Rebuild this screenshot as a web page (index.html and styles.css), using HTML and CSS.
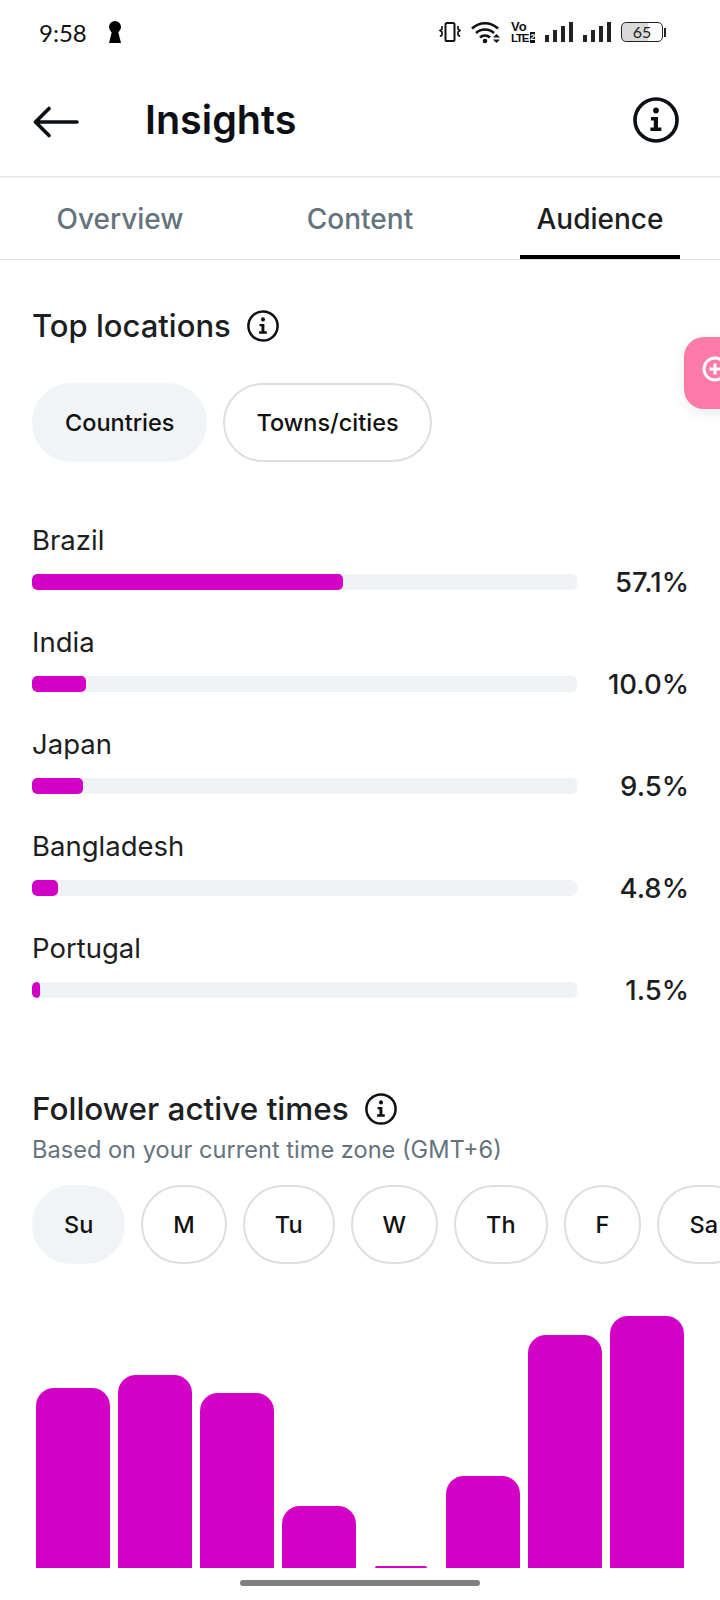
FILE: index.html
```html
<!DOCTYPE html>
<html lang="en">
<head>
  <meta charset="UTF-8">
  <title>Insights</title>
  <link rel="stylesheet" href="styles.css">
</head>
<body>
  <svg class="defs" width="0" height="0">
    <symbol id="info" viewBox="0 0 46 46">
      <circle cx="23" cy="23" r="21" fill="none" stroke="currentColor" stroke-width="3.6"/>
      <circle cx="23" cy="13.5" r="2.9" fill="currentColor"/>
      <path d="M18 20h7v10.5h3.4v3.5H17.4v-3.5h3.4v-7H18z" fill="currentColor"/>
    </symbol>
  </svg>

  <div class="page">
    <div class="status-bar">
      <div class="status-left">
        <span class="clock">9:58</span>
        <svg class="keyhole" width="14" height="22" viewBox="0 0 14 22">
          <circle cx="7" cy="6" r="6" fill="#000"/>
          <path d="M4.5 8h5l3.5 14H1z" fill="#000"/>
        </svg>
      </div>
      <div class="status-right">
        <svg width="22" height="22" viewBox="0 0 22 22">
          <rect x="6.5" y="2" width="9" height="18" rx="1.6" fill="none" stroke="#111" stroke-width="2"/>
          <path d="M3 5v3l-2 1.5 2 1.5v3l-2 1.5M19 5v3l2 1.5-2 1.5v3l2 1.5" fill="none" stroke="#111" stroke-width="1.6"/>
        </svg>
        <svg class="wifi" width="30" height="24" viewBox="0 0 30 24">
          <path d="M1 8.5c7.5-7 18.500-7 26 0M5 13c5-4.700 13-4.700 18 0M9 17.500c2.800-2.600 7.200-2.600 10 0" fill="none" stroke="#111" stroke-width="2.6"/>
          <circle cx="14" cy="21" r="2.300" fill="#111"/>
          <path d="M22 17.500h7l-3.500-3.500zM22 19.500h7l-3.500 3.500z" fill="#111"/>
        </svg>
        <div class="volte"><span class="vo">Vo</span><span class="lte">LTE<b>2</b></span></div>
        <div class="signal">
          <i style="height:7px"></i><i style="height:12px"></i><i style="height:16px"></i><i style="height:20px"></i>
        </div>
        <div class="signal">
          <i style="height:7px"></i><i style="height:12px"></i><i style="height:16px"></i><i style="height:20px"></i>
        </div>
        <div class="battery"><span class="battery-body">65</span><span class="battery-nub"></span></div>
      </div>
    </div>

    <div class="header">
      <svg class="back" width="46" height="32" viewBox="0 0 46 32">
        <path d="M44 16H3M16 2.500 2.500 16 16 29.500" fill="none" stroke="#0c1014" stroke-width="3.600" stroke-linecap="round" stroke-linejoin="round"/>
      </svg>
      <h1>Insights</h1>
      <svg class="info-big"><use href="#info"/></svg>
    </div>

    <div class="tabs">
      <div class="tab">Overview</div>
      <div class="tab">Content</div>
      <div class="tab active">Audience</div>
    </div>

    <div class="section locations">
      <h2>Top locations <svg class="info-small"><use href="#info"/></svg></h2>
      <div class="pills">
        <div class="pill selected">Countries</div>
        <div class="pill">Towns/cities</div>
      </div>
      <div class="rows">
        <div class="row">
          <div class="row-label">Brazil</div>
          <div class="row-line">
            <div class="track"><div class="fill" style="width:311px"></div></div>
            <div class="pct">57.1%</div>
          </div>
        </div>
        <div class="row">
          <div class="row-label">India</div>
          <div class="row-line">
            <div class="track"><div class="fill" style="width:54px"></div></div>
            <div class="pct">10.0%</div>
          </div>
        </div>
        <div class="row">
          <div class="row-label">Japan</div>
          <div class="row-line">
            <div class="track"><div class="fill" style="width:51px"></div></div>
            <div class="pct">9.5%</div>
          </div>
        </div>
        <div class="row">
          <div class="row-label">Bangladesh</div>
          <div class="row-line">
            <div class="track"><div class="fill" style="width:26px"></div></div>
            <div class="pct">4.8%</div>
          </div>
        </div>
        <div class="row">
          <div class="row-label">Portugal</div>
          <div class="row-line">
            <div class="track"><div class="fill" style="width:8px"></div></div>
            <div class="pct">1.5%</div>
          </div>
        </div>
      </div>
    </div>

    <div class="section times">
      <h2>Follower active times <svg class="info-small"><use href="#info"/></svg></h2>
      <p class="note">Based on your current time zone (GMT+6)</p>
      <div class="pills days">
        <div class="pill selected">Su</div>
        <div class="pill">M</div>
        <div class="pill">Tu</div>
        <div class="pill">W</div>
        <div class="pill">Th</div>
        <div class="pill">F</div>
        <div class="pill">Sa</div>
      </div>
      <div class="chart">
        <div class="bar" style="height:180px"></div>
        <div class="bar" style="height:193px"></div>
        <div class="bar" style="height:175px"></div>
        <div class="bar" style="height:62px"></div>
        <div class="bar tiny"></div>
        <div class="bar" style="height:92px"></div>
        <div class="bar" style="height:233px"></div>
        <div class="bar" style="height:252px"></div>
      </div>
    </div>

    <div class="float-tab">
      <svg width="28" height="28" viewBox="0 0 28 28">
        <circle cx="14" cy="14" r="11" fill="none" stroke="#fff" stroke-width="3"/>
        <path d="M14 8.500v11M8.500 14h11" stroke="#fff" stroke-width="3"/>
      </svg>
    </div>
    <div class="home-bar"></div>
  </div>
</body>
</html>
```

FILE: styles.css
```css
body {
  margin: 0;
  background: #fff;
  color: #1c1e21;
  font-family: Inter, 'Noto Sans', sans-serif;
}
.defs {
  position: absolute;
}
.page {
  position: relative;
  width: 720px;
  height: 1600px;
  overflow: hidden;
}

/* status bar */
.status-bar {
  display: flex;
  justify-content: space-between;
  align-items: center;
  height: 64px;
  padding: 0 54px 0 39px;
  box-sizing: border-box;
}
.status-left {
  display: flex;
  align-items: center;
  gap: 21px;
}
.clock {
  font-family: Lato, sans-serif;
  font-size: 24px;
  color: #111;
}
.status-right {
  display: flex;
  align-items: center;
  gap: 10px;
}
.volte {
  display: flex;
  flex-direction: column;
  width: 24px;
  font-family: 'Liberation Sans', sans-serif;
  font-weight: 700;
  color: #111;
}
.vo {
  font-size: 13px;
  line-height: 11px;
}
.lte {
  display: flex;
  align-items: center;
  font-size: 11.5px;
  line-height: 12px;
  letter-spacing: -1.2px;
  white-space: nowrap;
}
.lte b {
  width: 7px;
  margin-left: 2px;
  background: #111;
  color: #fff;
  font-size: 9px;
  line-height: 11px;
  letter-spacing: 0;
  text-align: center;
}
.signal {
  display: flex;
  align-items: flex-end;
  gap: 4px;
  height: 20px;
}
.signal i {
  display: block;
  width: 4px;
  background: #222;
}
.battery {
  display: flex;
  align-items: center;
  gap: 1px;
}
.battery-body {
  width: 42px;
  height: 20px;
  box-sizing: border-box;
  border: 1.5px solid #222;
  border-radius: 5px;
  background: linear-gradient(90deg, #d9d9d9 65%, #fff 65%);
  font-family: Lato, sans-serif;
  font-size: 16px;
  line-height: 17px;
  text-align: center;
  color: #222;
}
.battery-nub {
  width: 2px;
  height: 9px;
  background: #222;
}

/* header */
.header {
  display: flex;
  align-items: center;
  height: 112px;
  padding: 0 33px;
  border-bottom: 1px solid #e3e5e7;
}
.back {
  margin-top: 4px;
}
h1 {
  margin: 0 0 0 66px;
  flex: 1;
  font-size: 39.5px;
  font-weight: 600;
  color: #0c1014;
}
.info-big {
  width: 46px;
  height: 46px;
  margin-right: 8px;
  color: #0c1014;
}

/* tabs */
.tabs {
  display: grid;
  grid-template-columns: repeat(3, 240px);
  height: 83px;
  box-sizing: border-box;
  border-top: 1px solid #f2f3f4;
  border-bottom: 1px solid #dfe1e3;
}
.tab {
  display: flex;
  justify-content: center;
  align-items: center;
  width: 160px;
  margin: 0 auto;
  padding-top: 4px;
  border-bottom: 4px solid transparent;
  font-size: 28px;
  font-weight: 500;
  color: #65737d;
}
.tab.active {
  color: #1c1e21;
  border-bottom-color: #000;
}

/* sections */
.section {
  padding: 0 32px;
}
h2 {
  display: flex;
  align-items: center;
  gap: 16px;
  margin: 0;
  font-size: 31px;
  font-weight: 500;
  color: #1c1e21;
  white-space: nowrap;
}
.info-small {
  width: 32px;
  height: 32px;
  color: #0c1014;
}
.locations {
  padding-top: 47px;
}
.pills {
  display: flex;
  gap: 16px;
}
.locations .pills {
  margin-top: 39px;
}
.pill {
  display: flex;
  align-items: center;
  justify-content: center;
  flex: none;
  height: 79px;
  padding: 0 31px;
  box-sizing: border-box;
  border: 2px solid #dbdfe1;
  border-radius: 40px;
  font-size: 23.5px;
  font-weight: 500;
  color: #111;
}
.pill.selected {
  background: #f1f4f6;
  border-color: #f1f4f6;
}
.rows {
  margin-top: 61px;
}
.row {
  height: 102px;
}
.row-label {
  height: 41px;
  font-size: 27.5px;
  line-height: 34px;
}
.row-line {
  display: flex;
  align-items: center;
}
.track {
  width: 545px;
  height: 16px;
  border-radius: 5px;
  background: #eff3f5;
  overflow: hidden;
}
.fill {
  height: 16px;
  border-radius: 5px;
  background: #d300c5;
}
.pct {
  flex: 1;
  margin-right: -1px;
  text-align: right;
  font-size: 27.5px;
  font-weight: 500;
  line-height: 36px;
}

/* active times */
.times {
  padding-top: 56px;
}
.times h2 {
  font-size: 31.5px;
}
.note {
  margin: 6px 0 0;
  font-size: 23.6px;
  line-height: 32px;
  color: #65737d;
}
.days {
  margin-top: 19px;
}
.days .pill {
  padding: 0 30px;
}
.chart {
  display: flex;
  align-items: flex-end;
  gap: 8px;
  height: 304px;
  padding-left: 4px;
}
.bar {
  width: 74px;
  border-radius: 18px 18px 0 0;
  background: #d300c5;
}
.bar.tiny {
  width: 52px;
  height: 2px;
  margin: 0 11px;
  border-radius: 2px 2px 0 0;
}

/* overlays */
.float-tab {
  position: absolute;
  left: 684px;
  top: 337px;
  width: 60px;
  height: 72px;
  padding: 18px 0 0 17px;
  box-sizing: border-box;
  border-radius: 20px;
  background: #fb7aa7;
  box-shadow: 0 4px 14px rgba(0, 0, 0, 0.08);
}
.home-bar {
  position: absolute;
  left: 240px;
  top: 1580px;
  width: 240px;
  height: 6px;
  border-radius: 3px;
  background: #808080;
}
```
